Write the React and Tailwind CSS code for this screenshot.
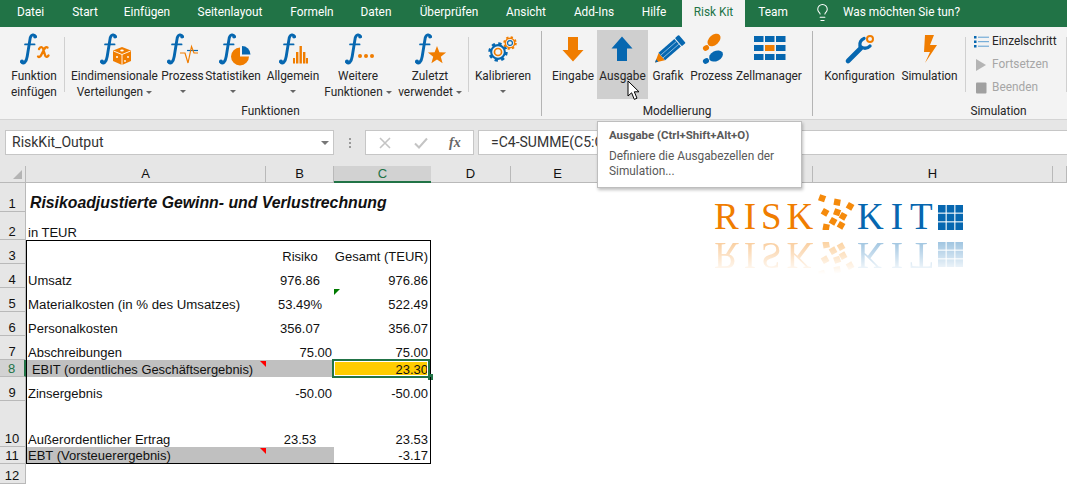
import React from "react";
import { Lightbulb } from "lucide-react";

const BLUE = "#0667b0";
const ORANGE = "#f07d00";

function F({ x, y = 34 }) {
  return (
    <g transform={`translate(${x} ${y})`} fill="none" stroke={BLUE} strokeLinecap="round">
      <path d="M15.6 2.6C14.4 0 11.3 .2 10.2 4L7.2 22.5C6.3 28.4 3.4 30.5 1.6 27.9" strokeWidth="2.9" />
      <path d="M5 10.4H14.6" strokeWidth="1.7" />
      <circle cx="15" cy="2.8" r="1.8" fill={BLUE} stroke="none" />
      <circle cx="2" cy="27.4" r="2" fill={BLUE} stroke="none" />
    </g>
  );
}

function Gear({ cx, cy, r, body, ring, tooth }) {
  return (
    <g fill="none">
      <circle cx={cx} cy={cy} r={r} stroke={body} strokeWidth={tooth} strokeDasharray={`${(2 * Math.PI * r) / 16} ${(2 * Math.PI * r) / 16}`} />
      <circle cx={cx} cy={cy} r={r - tooth * 0.6} stroke={body} strokeWidth={tooth * 0.8} />
      <circle cx={cx} cy={cy} r={r * 0.42} stroke={ring} strokeWidth={r * 0.2} fill="#f3f3f3" />
    </g>
  );
}

function star(cx, cy, R, r) {
  const p = [];
  for (let i = 0; i < 10; i++) {
    const a = -Math.PI / 2 + (i * Math.PI) / 5;
    const q = i % 2 ? r : R;
    p.push(`${(cx + q * Math.cos(a)).toFixed(1)},${(cy + q * Math.sin(a)).toFixed(1)}`);
  }
  return p.join(" ");
}

const icons = {
  fx: (
    <>
      <F x={20} />
      <path d="M39 49C41 46 43 47 43.5 50L45 55C45.5 57.5 47 57.5 48.5 55.5M47.5 47.5C46 46.5 45 47.5 43.5 50.5L41.5 54.5C40.5 57 39 57.5 38 56.5" fill="none" stroke={ORANGE} strokeWidth="2.3" strokeLinecap="round" />
    </>
  ),
  dice: (
    <>
      <F x={100} />
      <path d="M122 47L131 50.5V61L122 65L113 61V50.5Z" fill={ORANGE} />
      <path d="M113.5 51L122 54.5L130.5 51M122 54.5V65" fill="none" stroke="#fff" strokeWidth=".9" />
      <g fill="#fff">
        <ellipse cx="122" cy="50.5" rx="1.8" ry="1" />
        <circle cx="117" cy="57" r="1" />
        <circle cx="125" cy="61" r=".9" />
        <circle cx="128" cy="57" r=".9" />
      </g>
    </>
  ),
  proc: (
    <>
      <F x={167} />
      <path d="M187 50.5H198" stroke={BLUE} strokeWidth="1.2" />
      <path d="M180 53H185L185 53L188 63L191.5 46.5L194 53H198" fill="none" stroke={ORANGE} strokeWidth="1.2" />
    </>
  ),
  stat: (
    <>
      <F x={219} />
      <path d="M240 47.5V56.5H249A9 9 0 1 1 240 47.5Z" fill={ORANGE} />
      <path d="M242 46V54.5H250.5A8.5 8.5 0 0 0 242 46Z" fill={BLUE} />
    </>
  ),
  all: (
    <>
      <F x={279} />
      <g fill={ORANGE}>
        <rect x="293" y="58" width="2" height="5.5" />
        <rect x="296" y="52" width="2.4" height="11.5" />
        <rect x="299.5" y="46" width="2.4" height="17.5" />
        <rect x="303" y="52" width="2.4" height="11.5" />
        <rect x="306" y="58" width="2" height="5.5" />
      </g>
    </>
  ),
  more: (
    <>
      <F x={345} />
      <g fill={ORANGE}>
        <circle cx="360" cy="56" r="2" />
        <circle cx="366" cy="56" r="2" />
        <circle cx="372" cy="56" r="2" />
      </g>
    </>
  ),
  star: (
    <>
      <F x={415} />
      <polygon points={star(437, 55.5, 9.6, 4)} fill={ORANGE} />
    </>
  ),
  gear: (
    <>
      <Gear cx={498} cy={52} r={8.4} body={BLUE} ring={ORANGE} tooth={2.6} />
      <Gear cx={510} cy={43} r={5.8} body={ORANGE} ring={BLUE} tooth={1.9} />
    </>
  ),
  down: <path d="M568 37H578V50H583.5L573 61.5L562.5 50H568Z" fill={ORANGE} />,
  up: <path d="M622 36.5L632.5 48.5H627V61H617V48.5H611.5Z" fill={BLUE} />,
  pencil: (
    <g transform="translate(655 62.5) rotate(-41)">
      <path d="M0 0L9 -4.8V4.8Z" fill={ORANGE} />
      <path d="M0 0L3 -1.6V1.6Z" fill={BLUE} />
      <rect x="9" y="-5" width="21" height="10" fill={BLUE} />
      <path d="M9 -1.8H30M9 1.8H30" stroke="#9cc6e6" strokeWidth=".8" />
      <rect x="31" y="-5.4" width="5" height="10.8" rx="1" fill={BLUE} />
    </g>
  ),
  steps: (
    <>
      <ellipse cx="714" cy="40" rx="7.6" ry="5" transform="rotate(-42 714 40)" fill={ORANGE} />
      <ellipse cx="706" cy="48" rx="3.2" ry="2.6" transform="rotate(-30 706 48)" fill={ORANGE} />
      <ellipse cx="716" cy="56" rx="7.4" ry="5" transform="rotate(-28 716 56)" fill={BLUE} />
      <ellipse cx="706" cy="61" rx="3.2" ry="2.6" transform="rotate(-30 706 61)" fill={BLUE} />
    </>
  ),
  cells: (
    <g fill={BLUE}>
      <rect x="754" y="36" width="9.5" height="6" />
      <rect x="765" y="36" width="9.5" height="6" />
      <rect x="776" y="36" width="9.5" height="6" />
      <rect x="754" y="45" width="9.5" height="6" />
      <rect x="765" y="45" width="9.5" height="6" fill={ORANGE} />
      <rect x="776" y="45" width="9.5" height="6" />
      <rect x="754" y="54" width="9.5" height="6" />
      <rect x="765" y="54" width="9.5" height="6" />
      <rect x="776" y="54" width="9.5" height="6" />
    </g>
  ),
  wrench: (
    <>
      <path d="M848 61L861 48" stroke={BLUE} strokeWidth="4.6" strokeLinecap="round" />
      <path d="M870 46A6.6 6.6 0 0 1 860 46A6.6 6.6 0 0 1 864 38.5" fill="none" stroke={BLUE} strokeWidth="3.4" strokeLinecap="round" />
      <circle cx="870" cy="39" r="3" fill="none" stroke={ORANGE} strokeWidth="2" />
    </>
  ),
  bolt: <polygon points="925,35 934,35 930,45 937,45 925,63 930,52 924,52" fill={ORANGE} />,
};

function Caret() {
  return <span className="inline-block w-0 h-0 border-x-[3px] border-t-[3px] border-x-transparent border-t-[#666] align-middle" />;
}

function Btn({ x, w, className, icon, lines, caret, hover }) {
  return (
    <div className={`${className} h-[69px] flex flex-col items-center shrink-0 ${hover ? "bg-[#cfcfcf]" : ""}`}>
      <svg width={w} height="38" viewBox={`${x} 30 ${w} 38`} className="shrink-0 block">{icons[icon]}</svg>
      {lines.map((l, i) => (
        <div key={i} className="h-[16px] leading-[16px] whitespace-nowrap flex items-center gap-[3px]">
          {l}
          {caret && i === 1 && <Caret />}
        </div>
      ))}
    </div>
  );
}

const SepS = ({ className }) => <div className={`w-px h-[55px] mt-[7px] bg-[#d0d0d0] shrink-0 ${className}`} />;
const SepL = () => <div className="w-px h-[85px] mt-[1px] bg-[#b4b4b4] shrink-0" />;

const tabs = [
  ["Datei", "w-[51px]"],
  ["Start", "w-[58px]"],
  ["Einfügen", "w-[66px]"],
  ["Seitenlayout", "w-[100px]"],
  ["Formeln", "w-[64px]"],
  ["Daten", "w-[64px]"],
  ["Überprüfen", "w-[82px]"],
  ["Ansicht", "w-[72px]"],
  ["Add-Ins", "w-[64px]"],
  ["Hilfe", "w-[56px]"],
];

function TabBar() {
  return (
    <div className="h-[27px] bg-[#217346] text-white flex pl-[5px]">
      {tabs.map(([t, c]) => (
        <div key={t} className={`${c} h-full flex items-center justify-center pb-[2px]`}>{t}</div>
      ))}
      <div className="w-[63px] h-full bg-[#f3f3f3] text-[#217346] flex items-center justify-center pb-[2px]">Risk Kit</div>
      <div className="w-[56px] h-full flex items-center justify-center pb-[2px]">Team</div>
      <div className="h-full flex items-center ml-[12px] gap-[11px] pb-[2px]">
        <Lightbulb size={19} strokeWidth={1.3} />
        <span>Was möchten Sie tun?</span>
      </div>
    </div>
  );
}

function Ribbon() {
  return (
    <div className="h-[93px] bg-[#f3f3f3] border-b border-[#d4d4d4] flex text-[#262626] pt-[3px]">
      <div className="w-[541px] flex flex-col shrink-0">
        <div className="h-[73px] flex pl-[5px]">
          <Btn x={5} w={58} className="w-[58px]" icon="fx" lines={["Funktion", "einfügen"]} />
          <SepS className="mx-px" />
          <Btn x={66} w={97} className="w-[97px]" icon="dice" lines={["Eindimensionale", "Verteilungen"]} caret />
          <Btn x={163} w={39} className="w-[39px]" icon="proc" lines={["Prozess", ""]} caret />
          <Btn x={202} w={62} className="w-[62px]" icon="stat" lines={["Statistiken", ""]} caret />
          <Btn x={264} w={58} className="w-[58px]" icon="all" lines={["Allgemein", ""]} caret />
          <Btn x={322} w={72} className="w-[72px]" icon="more" lines={["Weitere", "Funktionen"]} caret />
          <Btn x={394} w={72} className="w-[72px]" icon="star" lines={["Zuletzt", "verwendet"]} caret />
          <SepS className="ml-[2px] mr-px" />
          <Btn x={470} w={66} className="w-[66px]" icon="gear" lines={["Kalibrieren", ""]} caret />
        </div>
        <div className="text-center leading-[16px]">Funktionen</div>
      </div>
      <SepL />
      <div className="w-[270px] flex flex-col shrink-0">
        <div className="h-[73px] flex pl-[7px]">
          <Btn x={549} w={48} className="w-[48px]" icon="down" lines={["Eingabe"]} />
          <Btn x={597} w={51} className="w-[51px]" icon="up" lines={["Ausgabe"]} hover />
          <Btn x={648} w={40} className="w-[40px]" icon="pencil" lines={["Grafik"]} />
          <Btn x={688} w={47} className="w-[47px]" icon="steps" lines={["Prozess"]} />
          <Btn x={735} w={68} className="w-[68px]" icon="cells" lines={["Zellmanager"]} />
        </div>
        <div className="text-center leading-[16px]">Modellierung</div>
      </div>
      <SepL />
      <div className="w-[254px] flex flex-col shrink-0">
        <div className="h-[73px] flex pl-[8px]">
          <Btn x={821} w={77} className="w-[77px]" icon="wrench" lines={["Konfiguration"]} />
          <Btn x={898} w={63} className="w-[63px]" icon="bolt" lines={["Simulation"]} />
          <SepS className="ml-[4px]" />
          <div className="w-[92px] ml-[8px] flex flex-col shrink-0">
            <div className="h-[23px] flex items-center gap-[2px]">
              <svg width="16" height="12" viewBox="0 0 16 12">
                <g fill={BLUE}>
                  <rect x="0" y="0" width="2.5" height="2.5" />
                  <rect x="0" y="4.5" width="2.5" height="2.5" />
                  <rect x="0" y="9" width="2.5" height="2.5" />
                </g>
                <path d="M4 1.2H15M4 5.7H15M4 10.2H15" stroke="#5c9ed2" strokeWidth="1" />
              </svg>
              <span>Einzelschritt</span>
            </div>
            <div className="h-[23px] flex items-center gap-[2px] text-[#a6a6a6]">
              <svg width="16" height="14" viewBox="0 0 16 14"><path d="M2 1L12 7L2 13Z" fill="#b4b4b4" /></svg>
              <span>Fortsetzen</span>
            </div>
            <div className="h-[23px] flex items-center gap-[2px] text-[#a6a6a6]">
              <svg width="16" height="14" viewBox="0 0 16 14"><rect x="2" y="1.5" width="10.5" height="11" rx="1" fill="#a0a0a0" /></svg>
              <span>Beenden</span>
            </div>
          </div>
          <SepS />
        </div>
        <div className="pl-[117px] text-center leading-[16px]">Simulation</div>
      </div>
    </div>
  );
}

function FormulaBar() {
  return (
    <div className="h-[46px] bg-[#e6e6e6] flex pt-[10px] pl-[5px]">
      <div className="w-[329px] h-[25px] bg-white border border-[#c6c6c6] flex items-center justify-between pl-[6px] pr-[4px] text-[14px] text-[#333]">
        <span>RiskKit_Output</span>
        <span className="w-0 h-0 border-x-[4px] border-t-[4px] border-x-transparent border-t-[#777]" />
      </div>
      <div className="w-[31px] h-[25px] flex flex-col items-center justify-center gap-[2px]">
        <span className="w-[2px] h-[2px] bg-[#999]" />
        <span className="w-[2px] h-[2px] bg-[#999]" />
        <span className="w-[2px] h-[2px] bg-[#999]" />
      </div>
      <div className="w-[109px] h-[25px] bg-white border border-[#c6c6c6] flex items-center pl-[13px]">
        <svg width="12" height="12" viewBox="0 0 12 12"><path d="M1 1L11 11M11 1L1 11" stroke="#c4c4c4" strokeWidth="1.6" /></svg>
        <svg className="ml-[23px]" width="14" height="12" viewBox="0 0 14 12"><path d="M1 6.5L5 10.5L13 1.5" fill="none" stroke="#c4c4c4" strokeWidth="2" /></svg>
        <span className="ml-[21px] font-['Liberation_Serif',serif] italic font-bold text-[14px] text-[#666]">fx</span>
      </div>
      <div className="w-[4px]" />
      <div className="flex-1 h-[25px] bg-white border border-[#c6c6c6] border-r-0 flex items-center pl-[12px] text-[14px] text-[#333]">
        =C4-SUMME(C5:C7)
      </div>
    </div>
  );
}

const hdr = [
  ["A", ""], ["B", ""], ["C", "sel"], ["D", ""], ["E", ""], ["", ""], ["", ""], ["H", ""], ["", ""],
];

function Header() {
  return (
    <div className="h-[17px] grid grid-cols-[26px_240px_68px_97px_80px_94px_104px_104px_240px_14px] bg-[#e6e6e6]">
      <div className="relative border-r border-b border-[#b9b9b9]">
        <span className="absolute right-[3px] bottom-[3px] w-0 h-0 border-l-[9px] border-b-[9px] border-l-transparent border-b-[#b4b4b4]" />
      </div>
      {hdr.map(([l, s], i) =>
        s ? (
          <div key={i} className="bg-[#d2d2d2] border-b-2 border-[#217346] text-[#217346] text-center leading-[15px]">{l}</div>
        ) : (
          <div key={i} className="border-r border-b border-[#b9b9b9] text-center leading-[16px]">{l}</div>
        )
      )}
    </div>
  );
}

const Red = () => <span className="absolute top-px right-0 w-0 h-0 border-t-[6px] border-l-[6px] border-t-[#ff0000] border-l-transparent" />;
const Green = () => <span className="absolute top-px left-0 w-0 h-0 border-t-[6px] border-r-[6px] border-t-[#007a00] border-r-transparent" />;

const rows = [
  { n: 1, h: "h-[29px]", free: "Risikoadjustierte Gewinn- und Verlustrechnung" },
  { n: 2, h: "h-[28px]", a: "in TEUR", noBox: true },
  { n: 3, h: "h-[24px]", b: "Risiko", bc: true, c: "Gesamt (TEUR)", top: true },
  { n: 4, h: "h-[24px]", a: "Umsatz", b: "976.86", bc: true, c: "976.86" },
  { n: 5, h: "h-[24px]", a: "Materialkosten (in % des Umsatzes)", wide: true, b: "53.49%", bc: true, c: "522.49", green: true },
  { n: 6, h: "h-[24px]", a: "Personalkosten", b: "356.07", bc: true, c: "356.07" },
  { n: 7, h: "h-[24px]", a: "Abschreibungen", b: "75.00", c: "75.00" },
  { n: 8, h: "h-[17px]", a: "EBIT (ordentliches Geschäftsergebnis)", gray: true, indent: true, c: "23.30", red: true, sel: true },
  { n: 9, h: "h-[24px]", a: "Zinsergebnis", b: "-50.00", c: "-50.00" },
  { n: 10, h: "h-[46px]", a: "Außerordentlicher Ertrag", b: "23.53", bc: true, c: "23.53" },
  { n: 11, h: "h-[17px]", a: "EBT (Vorsteuerergebnis)", gray: true, c: "-3.17", red: true, bottom: true },
  { n: 12, h: "h-[20px]", noBox: true },
];

function Row({ r }) {
  const box = !r.noBox && !r.free;
  const edge = `${r.top ? "border-t border-t-black" : ""} ${r.bottom ? "border-b border-b-black" : ""}`;
  return (
    <div className={`${r.h} grid grid-cols-[26px_240px_68px_97px] overflow-visible`}>
      <div className={`flex items-end justify-center pr-px border-r border-b leading-[15px] ${r.sel ? "bg-[#d2d2d2] text-[#217346] border-r-[#217346] border-r-2 border-b-[#b9b9b9]" : "bg-[#e6e6e6] border-[#b9b9b9]"}`}>
        {r.n}
      </div>
      {r.free ? (
        <div className="col-span-3 flex items-end pl-[4px] text-[15.8px] leading-[18px] font-bold italic whitespace-nowrap">{r.free}</div>
      ) : (
        <>
          <div className={`relative flex items-end leading-[15px] whitespace-nowrap ${box ? "border-l border-l-black" : ""} ${edge} ${r.indent ? "pl-[5px] text-[12.9px]" : r.noBox ? "pl-[2px]" : "pl-[1px]"} ${r.wide ? "text-[13.25px]" : ""} ${r.gray ? "bg-[#c0c0c0]" : ""}`}>
            {r.a}
            {r.red && <Red />}
          </div>
          <div className={`flex items-end leading-[15px] ${edge} ${r.bc ? "justify-center" : "justify-end pr-[2px]"} ${r.gray ? "bg-[#c0c0c0]" : ""}`}>{r.b}</div>
          <div className={`relative flex items-end justify-end pr-[2px] leading-[15px] whitespace-nowrap ${box ? "border-r border-r-black" : ""} ${edge} ${r.sel ? "bg-[#ffcc00]" : ""}`}>
            {r.c}
            {r.green && <Green />}
            {r.sel && (
              <>
                <span className="absolute inset-y-[-1px] left-[-2px] right-0 border-2 border-[#217346] shadow-[inset_0_0_0_1px_#fff]" />
                <span className="absolute right-[-3px] bottom-[-3px] w-[5px] h-[6px] bg-[#217346]" />
              </>
            )}
          </div>
        </>
      )}
    </div>
  );
}

function LogoMark() {
  return (
    <div className="flex items-end h-[38px] w-[250px] font-['Liberation_Serif',serif] text-[37px] leading-[27px]">
      <span className="w-[104px] text-[#f07d00] tracking-[5px] whitespace-nowrap">RISK</span>
      <svg width="40" height="38" viewBox="818 192 40 38" className="shrink-0">
        <g fill="#f58a0b">
          {[[822, 198, 20], [837, 202, 10], [850, 206, 30], [825, 212, 30], [837, 212, 20], [843, 216, 30], [833, 221, 30], [826, 227, 10], [841, 225, 30]].map(([x, y, a], i) => (
            <rect key={i} x={x - 3} y={y - 3} width="6.4" height="6.4" transform={`rotate(${a} ${x} ${y})`} />
          ))}
        </g>
      </svg>
      <span className="w-[81px] -ml-px text-[#0667b0] tracking-[7px] whitespace-nowrap">KIT</span>
      <svg width="25" height="25" viewBox="0 0 25 25" className="shrink-0">
        <g fill="#0667b0">
          {[0, 8.7, 17.4].flatMap((y) => [0, 8.7, 17.4].map((x) => <rect key={`${x}-${y}`} x={x} y={y} width="7.6" height="7.6" />))}
        </g>
      </svg>
    </div>
  );
}

function Sheet() {
  return (
    <div className="font-['Liberation_Sans',Arial,sans-serif] text-[13px] text-[#111]">
      <Header />
      {rows.map((r) => <Row key={r.n} r={r} />)}
    </div>
  );
}

export default function App() {
  return (
    <div className="relative w-[1067px] h-[484px] overflow-hidden bg-white font-['Roboto',sans-serif] text-[11.85px]">
      <TabBar />
      <Ribbon />
      <FormulaBar />
      <Sheet />

      <div className="absolute left-[714px] top-[192px]"><LogoMark /></div>
      <div className="absolute left-[714px] top-[242px] -scale-y-100 [mask-image:linear-gradient(to_top,rgba(0,0,0,.38),transparent_85%)]"><LogoMark /></div>

      <div className="absolute left-[597px] top-[121px] w-[205px] h-[67px] bg-white border border-[#bebebe] shadow-[1px_2px_3px_rgba(0,0,0,.25)] pl-[11px] pt-[5px] text-[#595959]">
        <div className="font-bold text-[11.45px] leading-[16px]">Ausgabe (Ctrl+Shift+Alt+O)</div>
        <div className="mt-[6px] leading-[15px]">Definiere die Ausgabezellen der<br />Simulation...</div>
      </div>

      <svg className="absolute left-[627px] top-[80px]" width="14" height="21" viewBox="0 0 14 21">
        <path d="M1 1V16L4.6 12.8L7.3 19.4L10 18.2L7.3 11.8H12Z" fill="#fff" stroke="#000" strokeWidth="1" />
      </svg>
    </div>
  );
}
